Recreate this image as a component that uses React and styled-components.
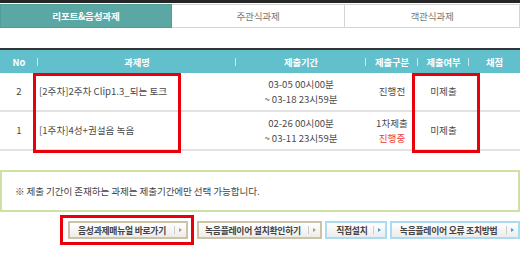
import React from "react";
import styled, { createGlobalStyle } from "styled-components";

const Global = createGlobalStyle`
  html, body { margin: 0; padding: 0; background: #fff; }
  body { font-family: "Noto Sans CJK KR", "Noto Sans", sans-serif; }
  * { box-sizing: border-box; }
`;

const Page = styled.div`
  width: 520px;
  height: 263px;
  overflow: hidden;
  background: #fff;
`;

const TopLine = styled.div`
  height: 3px;
  background: #262626;
  margin-bottom: 1px;
`;

const Tabs = styled.div`
  display: grid;
  grid-template-columns: 172px 173px 175px;
  height: 24px;
`;

const Tab = styled.div`
  display: flex;
  align-items: center;
  justify-content: center;
  font-size: 9.6px;
  letter-spacing: -0.2px;
  border: 1px solid ${(p) => (p.$active ? "#4f9c99" : "#d4d4d4")};
  border-left-width: ${(p) => (p.$first ? "1px" : "0")};
  background: ${(p) => (p.$active ? "#5aa7a4" : "#fff")};
  color: ${(p) => (p.$active ? "#fff" : "#777")};
  font-weight: ${(p) => (p.$active ? 700 : 400)};
`;

const TableWrap = styled.div`
  position: relative;
  margin-top: 20px;
  border-top: 2px solid #353535;
`;

const cols = "38px 198px 130px 52px 51px 51px";

const HeadRow = styled.div`
  display: grid;
  grid-template-columns: ${cols};
  height: 23px;
  background: #62c0cc;
`;

const HeadCell = styled.div`
  position: relative;
  display: flex;
  align-items: center;
  justify-content: center;
  color: #fff;
  font-weight: 700;
  font-size: 9.3px;
  &::after {
    content: "";
    display: ${(p) => (p.$last ? "none" : "block")};
    position: absolute;
    right: 0;
    top: 8px;
    height: 8px;
    width: 1px;
    background: #c7e9ee;
  }
`;

const Row = styled.div`
  display: grid;
  grid-template-columns: ${cols};
  height: 39px;
  border-bottom: 2px solid #e2e2e2;
`;

const Cell = styled.div`
  display: flex;
  flex-direction: column;
  align-items: ${(p) => (p.$left ? "flex-start" : "center")};
  justify-content: center;
  padding-left: ${(p) => (p.$left ? "1px" : "0")};
  font-size: 9.6px;
  line-height: 15px;
  color: #4a4a4a;
  white-space: nowrap;
`;

const Red = styled.span`
  color: #f0383b;
`;

const Mark = styled.div`
  position: absolute;
  border: 3px solid #e8000b;
  pointer-events: none;
`;

const Notice = styled.div`
  margin-top: 19px;
  height: 42px;
  border: 2px solid #cfe0a4;
  display: flex;
  align-items: center;
  padding-left: 13px;
  font-size: 9.6px;
  color: #444;
  letter-spacing: -0.1px;
`;

const Buttons = styled.div`
  display: flex;
  align-items: center;
  margin-top: 3px;
  padding-left: 60px;
  gap: 3px;
`;

const Highlight = styled.div`
  border: 3px solid #e8000b;
  padding: 3px 3px 3px 5px;
  width: 134px;
  height: 30px;
`;

const Btn = styled.div`
  display: flex;
  align-items: center;
  width: ${(p) => p.$w}px;
  height: 18px;
  padding: 0 4px 0 ${(p) => p.$pl || 10}px;
  border: 2px solid ${(p) => (p.$blue ? "#a9dcee" : "#cbc3a6")};
  background: linear-gradient(#ffffff, #ececec);
  font-size: 8.8px;
  font-weight: 700;
  color: #444;
  white-space: nowrap;
  letter-spacing: -0.25px;
`;

const Arrow = styled.span`
  display: flex;
  align-items: center;
  gap: 4px;
  margin-left: auto;
  &::before {
    content: "";
    width: 1px;
    height: 8px;
    background: #ccc;
  }
  &::after {
    content: "";
    border-left: 3px solid ${(p) => (p.$blue ? "#3aa3d6" : "#c99a4e")};
    border-top: 2.5px solid transparent;
    border-bottom: 2.5px solid transparent;
  }
`;

const Button = ({ children, w, blue, pl }) => (
  <Btn $w={w} $blue={blue} $pl={pl}>
    <span>{children}</span>
    <Arrow $blue={blue} />
  </Btn>
);

export default function App() {
  return (
    <Page>
      <Global />
      <TopLine />
      <Tabs>
        <Tab $active $first>리포트&amp;음성과제</Tab>
        <Tab>주관식과제</Tab>
        <Tab>객관식과제</Tab>
      </Tabs>
      <TableWrap>
        <HeadRow>
          <HeadCell>No</HeadCell>
          <HeadCell>과제명</HeadCell>
          <HeadCell>제출기간</HeadCell>
          <HeadCell>제출구분</HeadCell>
          <HeadCell>제출여부</HeadCell>
          <HeadCell $last>채점</HeadCell>
        </HeadRow>
        <Row>
          <Cell>2</Cell>
          <Cell $left>[2주차]2주차 Clip1.3_되는 토크</Cell>
          <Cell>
            <div>03-05 00시00분</div>
            <div>~ 03-18 23시59분</div>
          </Cell>
          <Cell>진행전</Cell>
          <Cell>미제출</Cell>
          <Cell />
        </Row>
        <Row>
          <Cell>1</Cell>
          <Cell $left>[1주차]4성+권설음 녹음</Cell>
          <Cell>
            <div>02-26 00시00분</div>
            <div>~ 03-11 23시59분</div>
          </Cell>
          <Cell>
            <div>1차제출</div>
            <Red>진행중</Red>
          </Cell>
          <Cell>미제출</Cell>
          <Cell />
        </Row>
        <Mark style={{ left: 33, top: 23, width: 148, height: 80 }} />
        <Mark style={{ left: 412, top: 23, width: 68, height: 80 }} />
      </TableWrap>
      <Notice>※ 제출 기간이 존재하는 과제는 제출기간에만 선택 가능합니다.</Notice>
      <Buttons>
        <Highlight>
          <Button w={120} pl={8}>음성과제매뉴얼 바로가기</Button>
        </Highlight>
        <Button w={126} pl={6}>녹음플레이어 설치확인하기</Button>
        <Button w={62} blue pl={9}>직접설치</Button>
        <Button w={131} blue pl={8}>녹음플레이어 오류 조치방법</Button>
      </Buttons>
    </Page>
  );
}
